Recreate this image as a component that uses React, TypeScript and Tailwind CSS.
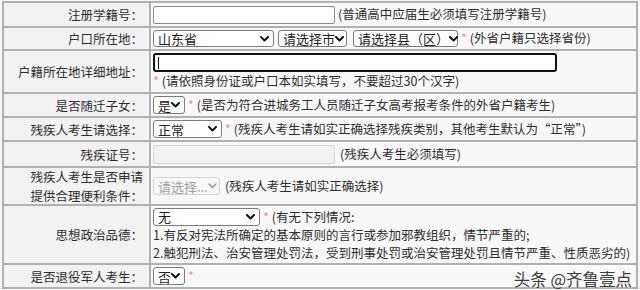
import React from 'react';

const Req = () => <span className="text-[#ef8c8c] mx-[3px]">*</span>;

const Chevron: React.FC<{ muted?: boolean }> = ({ muted }) => (
  <svg width="9" height="6" viewBox="0 0 9 6" className="shrink-0">
    <path
      d="M1 1l3.5 3.5L8 1"
      fill="none"
      stroke={muted ? '#8a8a8a' : '#111'}
      strokeWidth={muted ? 1.2 : 2}
      strokeLinecap="round"
      strokeLinejoin="round"
    />
  </svg>
);

interface FakeSelectProps {
  text: string;
  className: string;
  disabled?: boolean;
}

const FakeSelect: React.FC<FakeSelectProps> = ({ text, className, disabled }) => (
  <div
    className={
      'inline-flex items-center justify-between shrink-0 rounded-[3px] border pl-[4px] pr-[4px] text-[13px] leading-none ' +
      (disabled ? 'border-[#d4d4d4] bg-[#f7f7f7] text-[#a3a3a3] ' : 'border-[#7b7b7b] bg-white text-[#222] ') +
      className
    }
  >
    <span>{text}</span>
    <Chevron muted={disabled} />
  </div>
);

interface RowProps {
  label: React.ReactNode;
  height: string;
  children: React.ReactNode;
  last?: boolean;
}

const Row: React.FC<RowProps> = ({ label, height, children, last }) => (
  <div className={'flex ' + height + (last ? '' : ' border-b-2 border-[#b1b1b1]')}>
    <div className="w-[147px] shrink-0 border-r-2 border-[#b1b1b1] bg-[#f2f2f2] flex items-center justify-end pr-[6px] text-right leading-[19px]">
      {label}
    </div>
    <div className="flex-1 bg-[#f8f8f8] pl-[2px] flex items-center whitespace-nowrap">{children}</div>
  </div>
);

export default function App() {
  return (
    <div className="relative w-[640px] h-[290px] overflow-hidden bg-[#f6f6f6] pt-[1px] pl-[2px] text-[12.5px] text-[#2e2e2e] font-['Noto_Sans_CJK_SC','Noto_Sans',sans-serif]">
      <div className="w-[636px] border-2 border-[#b1b1b1]">
        <Row label="注册学籍号：" height="h-[25px]">
          <div className="w-[182px] h-[18px] rounded-[2px] border border-[#8d8d8d] bg-white shrink-0" />
          <span className="ml-[3px]">(普通高中应届生必须填写注册学籍号)</span>
        </Row>

        <Row label="户口所在地：" height="h-[23px]">
          <FakeSelect text="山东省" className="w-[121px] h-[17px]" />
          <FakeSelect text="请选择市" className="w-[69px] h-[17px] ml-[4px]" />
          <FakeSelect text="请选择县（区）" className="w-[105px] h-[17px] ml-[6px]" />
          <Req />
          <span>(外省户籍只选择省份)</span>
        </Row>

        <Row label="户籍所在地详细地址：" height="h-[43px]">
          <div className="flex flex-col">
            <div className="w-[404px] h-[19px] rounded-[3px] border-2 border-[#111] bg-white flex items-center pl-[3px]">
              <div className="w-px h-[12px] bg-black" />
            </div>
            <div className="leading-[18px]">
              <span className="text-[#ef8c8c] mr-[3px]">*</span>
              (请依照身份证或户口本如实填写，不要超过30个汉字)
            </div>
          </div>
        </Row>

        <Row label="是否随迁子女：" height="h-[24px]">
          <FakeSelect text="是" className="w-[32px] h-[18px]" />
          <Req />
          <span>(是否为符合进城务工人员随迁子女高考报考条件的外省户籍考生)</span>
        </Row>

        <Row label="残疾人考生请选择：" height="h-[24px]">
          <FakeSelect text="正常" className="w-[69px] h-[18px]" />
          <Req />
          <span>(残疾人考生请如实正确选择残疾类别，其他考生默认为“正常”)</span>
        </Row>

        <Row label="残疾证号：" height="h-[26px]">
          <div className="w-[182px] h-[19px] rounded-[2px] border border-[#d6d6d6] bg-[#f1f1f1] shrink-0" />
          <span className="ml-[5px]">(残疾人考生必须填写)</span>
        </Row>

        <Row
          label={
            <span>
              残疾人考生是否申请
              <br />
              提供合理便利条件：
            </span>
          }
          height="h-[38px]"
        >
          <FakeSelect text="请选择..." className="w-[67px] h-[18px]" disabled />
          <span className="ml-[5px]">(残疾人考生请如实正确选择)</span>
        </Row>

        <Row label="思想政治品德：" height="h-[59px]">
          <div className="flex flex-col leading-[18px]">
            <div className="flex items-center h-[18px]">
              <FakeSelect text="无" className="w-[107px] h-[18px]" />
              <Req />
              <span>(有无下列情况:</span>
            </div>
            <div className="h-[18px]">1.有反对宪法所确定的基本原则的言行或参加邪教组织，情节严重的;</div>
            <div className="h-[18px]">2.触犯刑法、治安管理处罚法，受到刑事处罚或治安管理处罚且情节严重、性质恶劣的)</div>
          </div>
        </Row>

        <Row label="是否退役军人考生：" height="h-[22px]" last>
          <FakeSelect text="否" className="w-[32px] h-[18px]" />
          <Req />
        </Row>
      </div>

      <div className="absolute right-[8px] bottom-[3px] text-[16.5px] leading-none text-[#3c3c3c] [text-shadow:0_0_2px_#ffffff]">
        头条 @齐鲁壹点
      </div>
    </div>
  );
}
